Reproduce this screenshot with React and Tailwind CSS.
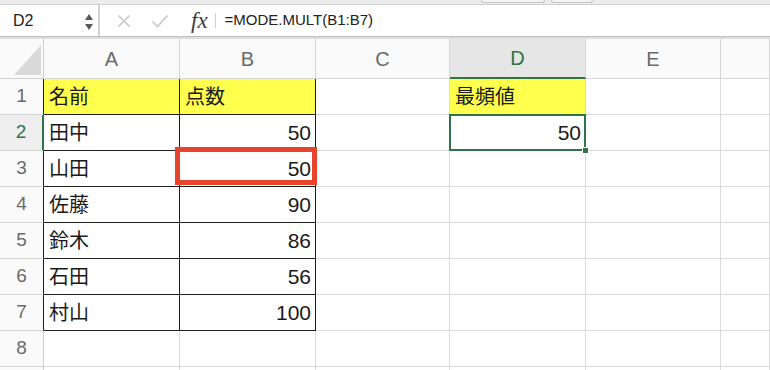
import React from 'react';

const rows = [
  { n: 1, a: '名前', b: '点数', d: '最頻値', head: true },
  { n: 2, a: '田中', b: '50', d: '50' },
  { n: 3, a: '山田', b: '50' },
  { n: 4, a: '佐藤', b: '90' },
  { n: 5, a: '鈴木', b: '86' },
  { n: 6, a: '石田', b: '56' },
  { n: 7, a: '村山', b: '100' },
  { n: 8 },
  { n: 9 },
];

const cols = ['A', 'B', 'C', 'D', 'E', ''];

const grid = 'border-r border-b border-[#dadada]';
const dark = 'border-r border-b border-[#1e1e1e]';

const RowHead = ({ n }) => {
  const inTable = n <= 7;
  if (n === 2) {
    return (
      <div className="h-[36px] flex items-center justify-center bg-[#eeeeee] border-b border-[#d4d4d4] border-r-2 border-r-[#2f7448] text-[19px] text-[#2f7448]">
        {n}
      </div>
    );
  }
  return (
    <div
      className={
        inTable
          ? 'h-[36px] flex items-center justify-center bg-[#fafafa] border-b border-[#d4d4d4] border-r border-r-[#1e1e1e] text-[19px] text-[#6a6a6a]'
          : 'h-[36px] flex items-center justify-center bg-[#fafafa] border-b border-[#d4d4d4] border-r border-r-[#cfcfcf] text-[19px] text-[#6a6a6a]'
      }
    >
      {n < 9 ? n : ''}
    </div>
  );
};

export default function App() {
  return (
    <div className="w-[770px] h-[370px] overflow-hidden bg-white font-['Liberation_Sans','Noto_Sans_CJK_JP',sans-serif] text-[#1a1a1a]">
      {/* top strip */}
      <div className="h-[5px] bg-[#ececec] border-b border-[#cfcfcf] flex">
        <div className="ml-[481px] w-[64px] h-[3px] border-x border-b border-[#c9c9c9] rounded-b-[3px] bg-[#f4f4f4]"></div>
        <div className="ml-[6px] w-[42px] h-[3px] border-x border-b border-[#c9c9c9] rounded-b-[3px] bg-[#f4f4f4]"></div>
      </div>

      {/* formula bar */}
      <div className="h-[32px] flex items-center bg-white border-b border-[#bdbdbd]">
        <div className="w-[100px] h-full flex items-center justify-between pl-[13px] pr-[4px] border-r-2 border-[#d2d2d2]">
          <span className="text-[16px] text-[#222]">D2</span>
          <svg width="10" height="20" viewBox="0 0 10 20">
            <path d="M5 3 L9 9 L1 9 Z" fill="#5a5a5a" />
            <path d="M5 19 L9 13 L1 13 Z" fill="#5a5a5a" />
          </svg>
        </div>
        <div className="flex items-center h-full">
          <svg className="ml-[17px]" width="14" height="14" viewBox="0 0 14 14">
            <path d="M1.5 1.5 L12.5 12.5 M12.5 1.5 L1.5 12.5" stroke="#c6c6c6" strokeWidth="1.6" fill="none" />
          </svg>
          <svg className="ml-[20px]" width="18" height="14" viewBox="0 0 18 14">
            <path d="M1.5 7.5 L6.5 12.5 L16.5 1.5" stroke="#c6c6c6" strokeWidth="1.6" fill="none" />
          </svg>
          <span className="ml-[22px] font-['Liberation_Serif',serif] italic text-[23px] text-[#3d3d3d] leading-none">fx</span>
          <div className="ml-[7px] w-px h-[15px] bg-[#cfcfcf]"></div>
          <span className="ml-[9px] text-[15px] text-[#222]">=MODE.MULT(B1:B7)</span>
        </div>
      </div>
      <div className="h-[2px] bg-[#dedede]"></div>

      {/* sheet */}
      <div className="grid grid-cols-[44px_136px_136px_134px_136px_135px_1fr]">
        <div className="h-[40px] bg-[#fafafa] border-r border-b border-[#d0d0d0] flex items-end justify-end pr-[2px] pb-[3px]">
          <svg width="27" height="30" viewBox="0 0 27 30">
            <path d="M27 0 L27 30 L0 30 Z" fill="#d9d9d9" />
          </svg>
        </div>
        {cols.map((c) =>
          c === 'D' ? (
            <div
              key={c}
              className="h-[40px] flex items-center justify-center bg-[#e6e6e6] border-r border-[#d6d6d6] border-b-2 border-b-[#2f7448] text-[20px] text-[#2f7448]"
            >
              {c}
            </div>
          ) : (
            <div
              key={c || 'f'}
              className="h-[40px] flex items-center justify-center bg-[#fafafa] border-r border-b border-[#d6d6d6] text-[20px] text-[#6a6a6a]"
            >
              {c}
            </div>
          )
        )}

        {rows.map((r) => {
          const inTable = r.n <= 7;
          return (
            <React.Fragment key={r.n}>
              <RowHead n={r.n} />
              <div
                className={
                  r.head
                    ? `h-[36px] flex items-center pl-[5px] text-[20px] bg-[#ffff4d] ${dark}`
                    : inTable
                    ? `h-[36px] flex items-center pl-[5px] text-[20px] ${dark}`
                    : `h-[36px] ${grid}`
                }
              >
                {r.a}
              </div>
              <div
                className={
                  r.head
                    ? `h-[36px] flex items-center pl-[5px] text-[20px] bg-[#ffff4d] ${dark}`
                    : inTable
                    ? `relative h-[36px] flex items-center justify-end pr-[4px] text-[21px] ${dark}`
                    : `h-[36px] ${grid}`
                }
              >
                {r.b}
                {r.n === 3 && (
                  <div className="absolute left-[-5px] right-[-2px] top-[-4px] bottom-[1px] border-[5px] border-[#e8432c] z-10"></div>
                )}
              </div>
              <div className={`h-[36px] ${grid}`}></div>
              <div
                className={
                  r.n === 1
                    ? `h-[36px] flex items-center pl-[5px] text-[20px] bg-[#ffff4d] ${grid}`
                    : r.n === 2
                    ? `relative h-[36px] flex items-center justify-end pr-[4px] text-[21px] ${grid}`
                    : `h-[36px] ${grid}`
                }
              >
                {r.d}
                {r.n === 2 && (
                  <div className="absolute left-[-1px] right-[-1px] top-[-1px] bottom-[-1px] border-2 border-[#2f7448] z-10">
                    <div className="absolute right-[-5px] bottom-[-5px] w-[7px] h-[7px] bg-[#2f7448] border border-white"></div>
                  </div>
                )}
              </div>
              <div className={`h-[36px] ${grid}`}></div>
              <div className={`h-[36px] ${grid}`}></div>
            </React.Fragment>
          );
        })}
      </div>
    </div>
  );
}
